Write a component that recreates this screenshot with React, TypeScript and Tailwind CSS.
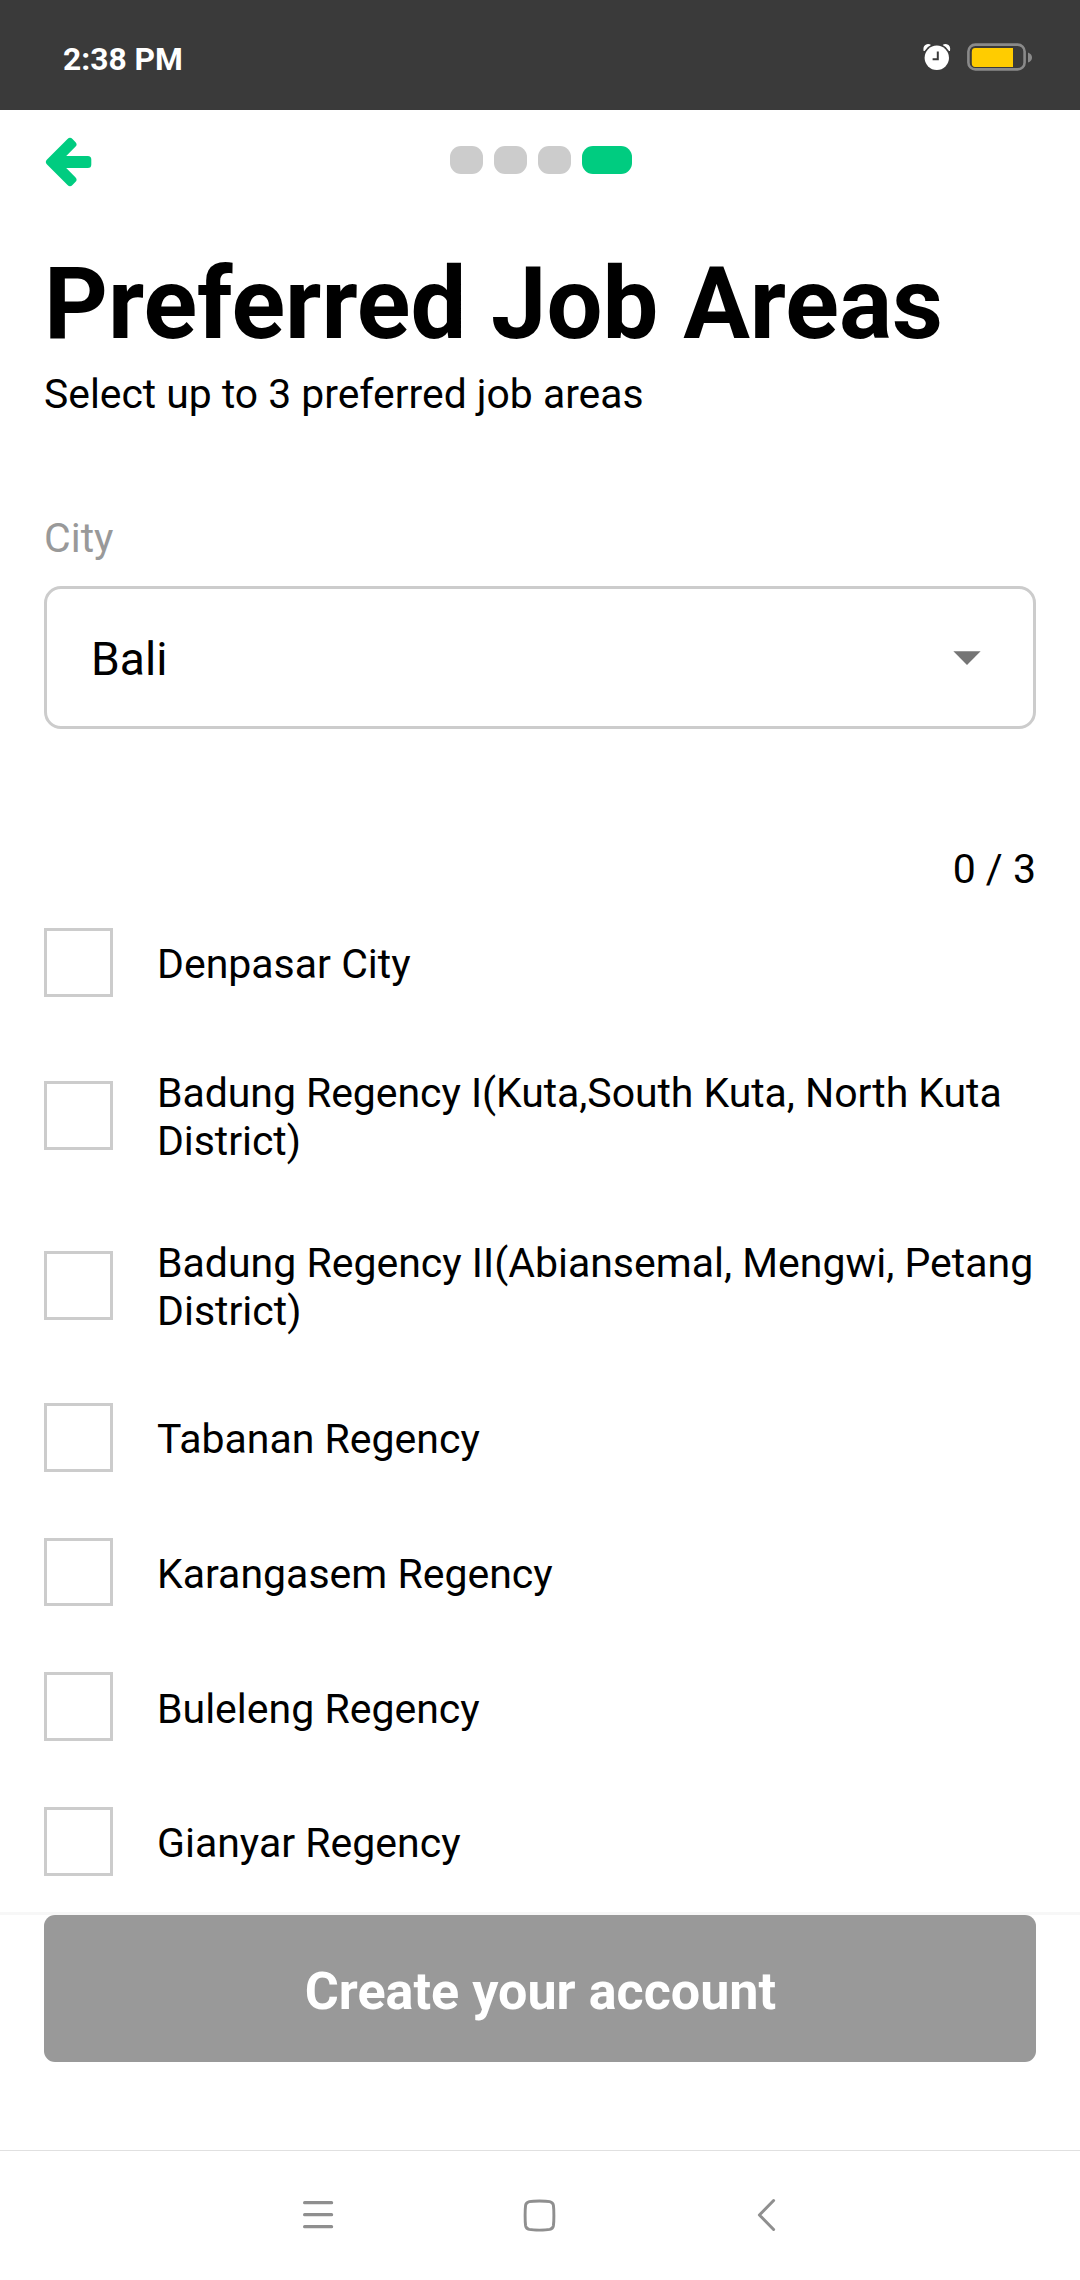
const oneLine = { row: 'h-[68.75px]', box: 'h-[68.75px]', text: 'pt-[3.4px]' };
const twoLine = { row: 'h-[104px]', box: 'mt-px h-[69px]', text: 'pt-[4.5px]' };

const areas = [
  { name: 'Denpasar City', ...oneLine },
  { name: 'Badung Regency I(Kuta,South Kuta, North Kuta District)', ...twoLine, text: 'pt-[4.5px] tracking-[-0.06px]' },
  { name: 'Badung Regency II(Abiansemal, Mengwi, Petang District)', ...twoLine },
  { name: 'Tabanan Regency', ...oneLine },
  { name: 'Karangasem Regency', ...oneLine },
  { name: 'Buleleng Regency', ...oneLine },
  { name: 'Gianyar Regency', ...oneLine },
];

function AlarmIcon() {
  return (
    <svg className="h-[28px] w-[28px]" viewBox="0 0 28 28" fill="#fff">
      <circle cx="13.8" cy="14.8" r="12.2" />
      <path d="M0.6 8Q-0.4 2.4 3.8 1.2Q6.2 0.6 8 2Q3.6 4 1.6 7.9Z" />
      <path d="M27 8Q28 2.4 23.8 1.2Q21.4 0.6 19.6 2Q24 4 26 7.9Z" />
      <path d="M14.8 8.4V16.2H9.6" fill="none" stroke="#3a3a3a" strokeWidth="2" />
    </svg>
  );
}

function BatteryIcon() {
  return (
    <svg className="h-[28px] w-[66px]" viewBox="0 0 66 28">
      <rect x="1.4" y="1.6" width="56.2" height="24.8" rx="7" fill="none" stroke="#8a8a8a" strokeWidth="2.6" />
      <path d="M8 5H46V24H8Q4.8 24 4.8 20V9Q4.8 5 8 5Z" fill="#ffcc00" />
      <path d="M61 9.4Q65 11 65 14.5T61 19.6Z" fill="#8a8a8a" />
    </svg>
  );
}

function BackArrow() {
  return (
    <svg className="h-[52px] w-[50px]" viewBox="0 0 50 52">
      <path
        d="M5.5 26L26 5.5L28.9 8.4L13.8 23.5H43.8V28.5H13.8L28.9 43.6L26 46.5Z"
        fill="#00cc80"
        stroke="#00cc80"
        strokeWidth="7"
        strokeLinejoin="round"
      />
    </svg>
  );
}

export default function App() {
  return (
    <div className="flex h-[2280px] w-[1080px] flex-col overflow-hidden bg-white font-[Roboto,sans-serif] text-[41px] leading-[48px] text-black">
      <div className="flex h-[110px] shrink-0 items-center justify-between bg-[#3a3a3a] pt-[4px] pr-[47px] pl-[63px]">
        <span className="pt-[4px] text-[31.8px] leading-[38px] font-bold text-white">2:38 PM</span>
        <div className="flex items-center gap-[16px]">
          <AlarmIcon />
          <BatteryIcon />
        </div>
      </div>

      <header className="grid h-[104px] shrink-0 grid-cols-3 items-center px-[44px]">
        <BackArrow />
        <div className="flex justify-center gap-[11px] pb-[4px] pl-[2px]">
          <span className="h-[28px] w-[33px] shrink-0 rounded-[11px] bg-[#cccccc]" />
          <span className="h-[28px] w-[33px] shrink-0 rounded-[11px] bg-[#cccccc]" />
          <span className="h-[28px] w-[33px] shrink-0 rounded-[11px] bg-[#cccccc]" />
          <span className="h-[28px] w-[50px] shrink-0 rounded-[11px] bg-[#00cc80]" />
        </div>
      </header>

      <main className="flex min-h-0 flex-1 flex-col overflow-hidden px-[44px]">
        <h1 className="mt-[32px] text-[99.3px] leading-[116px] font-bold whitespace-nowrap">Preferred Job Areas</h1>
        <p className="mt-[8px] text-[40.85px]">Select up to 3 preferred job areas</p>

        <label className="mt-[96px] text-[#999999]">City</label>
        <div className="mt-[24px] flex h-[143px] shrink-0 items-center justify-between rounded-[17px] border-[3px] border-[#cccccc] pr-[52px] pl-[44px]">
          <span className="pt-[2px] text-[46.2px] leading-[56px]">Bali</span>
          <svg className="h-[14px] w-[28px]" viewBox="0 0 28 14">
            <path d="M0.4 0.3H27.6L14 14Z" fill="#757575" />
          </svg>
        </div>

        <p className="mt-[116px] text-right">0 / 3</p>

        <ul className="mt-[35.2px] flex flex-col gap-[66px]">
          {areas.map((area) => (
            <li key={area.name} className={`flex shrink-0 items-center ${area.row}`}>
              <span className={`w-[69px] shrink-0 border-[3px] border-[#cccccc] ${area.box}`} />
              <span className={`-mr-[10px] ml-[44px] flex-1 leading-[48px] ${area.text}`}>{area.name}</span>
            </li>
          ))}
        </ul>
      </main>

      <footer className="h-[238px] shrink-0 border-t-[3px] border-[#f7f7f7] px-[44px]">
        <button className="flex h-[147px] w-full items-center justify-center rounded-[11px] bg-[#999999] pt-[7px] pl-px text-[52.1px] leading-[62px] font-bold text-white">
          Create your account
        </button>
      </footer>

      <nav className="flex h-[130px] shrink-0 items-center border-t border-[#e0e0e0] pb-[1px] pl-[302px]">
        <svg className="h-[36px] w-[32px]" viewBox="0 0 32 36" stroke="#8f8f8f" strokeWidth="3.2" strokeLinecap="round">
          <path d="M2.6 5.7H29.6M2.6 17.7H29.6M2.6 29.7H29.6" />
        </svg>
        <svg className="ml-[188px] h-[35px] w-[35px]" viewBox="0 0 36 36" fill="none" stroke="#8f8f8f" strokeWidth="3">
          <path d="M18 3Q25 3 28.5 3.7Q31.8 4.5 32.3 7.5Q32.8 11 32.8 18T32.3 28.5Q31.8 31.5 28.5 32.3Q25 33 18 33T7.5 32.3Q4.2 31.5 3.7 28.5Q3.2 25 3.2 18T3.7 7.5Q4.2 4.5 7.5 3.7Q11 3 18 3Z" />
        </svg>
        <svg className="ml-[199px] h-[36px] w-[22px]" viewBox="0 0 22 36" fill="none" stroke="#8f8f8f" strokeWidth="3" strokeLinecap="round" strokeLinejoin="round">
          <path d="M17.6 3.5L3.4 18L17.6 32.5" />
        </svg>
      </nav>
    </div>
  );
}
